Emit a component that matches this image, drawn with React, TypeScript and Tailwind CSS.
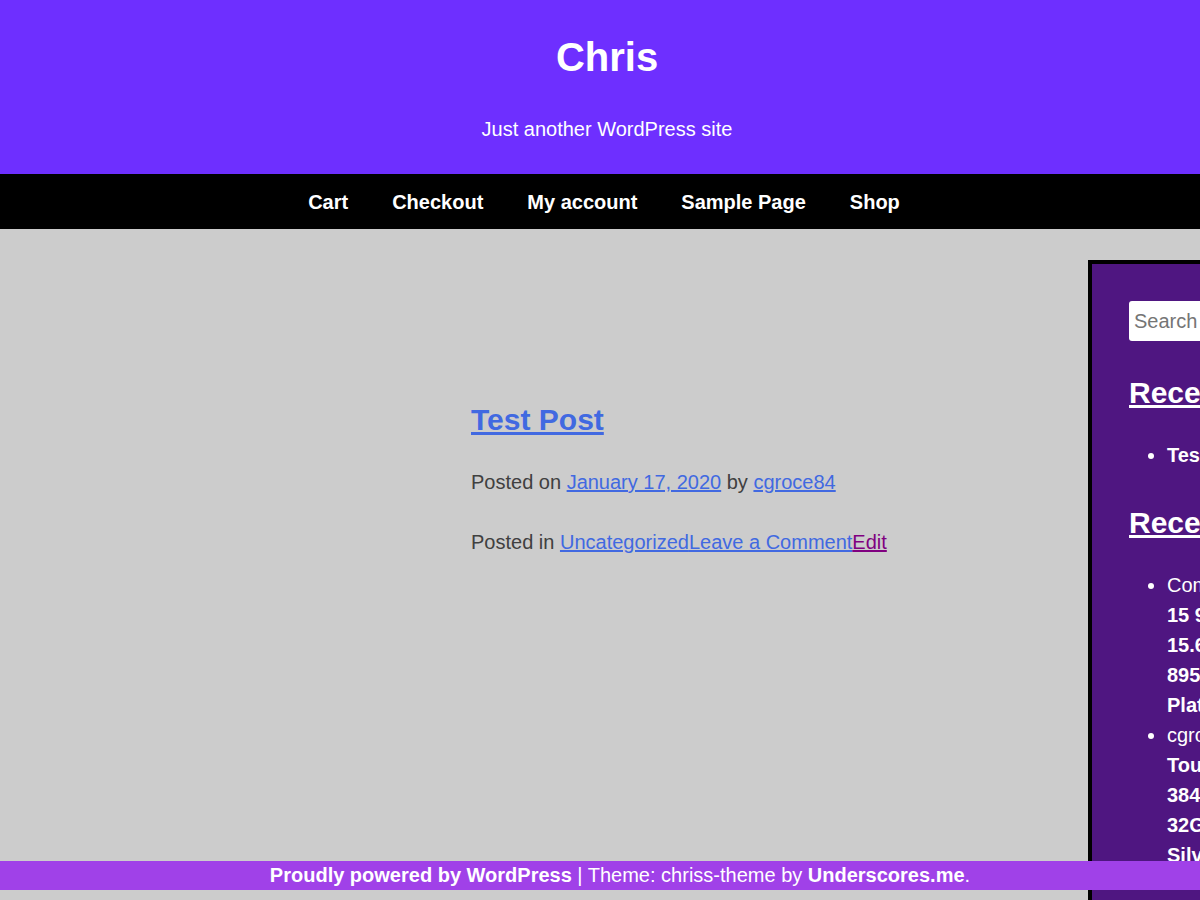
const NAV_ITEMS = ['Cart', 'Checkout', 'My account', 'Sample Page', 'Shop']

function SiteHeader() {
  return (
    <header className="bg-[#6e2fff] text-white text-center pt-[33px] pb-[30px] pl-[14px]">
      <h1 className="text-[40px] leading-[48px] font-bold">Chris</h1>
      <p className="mt-[33px] text-[20px] leading-[30px]">Just another WordPress site</p>
    </header>
  )
}

function MainNav() {
  return (
    <nav className="bg-black h-[55px] flex items-center justify-center pl-[8px]">
      <ul className="flex">
        {NAV_ITEMS.map((item) => (
          <li key={item} className="px-[22px] text-white text-[20px] font-bold leading-[30px]">
            {item}
          </li>
        ))}
      </ul>
    </nav>
  )
}

function Post() {
  return (
    <article className="pl-[471px] pt-[142px] text-[20px] leading-[30px] text-[#404040]">
      <h2 className="text-[30px] leading-[36px] font-bold text-[#4169e1] underline">Test Post</h2>
      <p className="mt-[29px]">
        Posted on <a className="text-[#4169e1] underline">January 17, 2020</a> by{' '}
        <a className="text-[#4169e1] underline">cgroce84</a>
      </p>
      <p className="mt-[30px] whitespace-nowrap">
        Posted in <a className="text-[#4169e1] underline">Uncategorized</a>
        <a className="text-[#4169e1] underline">Leave a Comment</a>
        <a className="text-[#800080] underline">Edit</a>
      </p>
    </article>
  )
}

function Sidebar() {
  return (
    <aside className="w-[360px] shrink-0 border-4 border-black bg-[#4f1681] text-white pt-[37px] pl-[37px] pb-[40px] text-[20px] leading-[30px]">
      <input
        placeholder="Search"
        className="w-[280px] h-[40px] rounded-[3px] bg-white px-[5px] text-[20px] text-[#333] placeholder:text-[#757575] outline-none"
      />
      <h2 className="mt-[34px] text-[30px] leading-[36px] font-bold underline">Recent Posts</h2>
      <ul className="mt-[29px] list-disc pl-[38px]">
        <li className="font-bold">Test Post</li>
      </ul>
      <h2 className="mt-[35px] text-[30px] leading-[36px] font-bold underline">Recent Comments</h2>
      <ul className="mt-[29px] list-disc pl-[38px] whitespace-nowrap">
        <li>
          Commenter on
          <br />
          <a className="font-bold">
            15 9th Gen Laptop
            <br />
            15.6" FHD Display
            <br />
            8950HK 16GB RAM
            <br />
            Platinum Silver
          </a>
        </li>
        <li>
          cgroce84 on
          <br />
          <a className="font-bold">
            Touchscreen Laptop
            <br />
            384GB SSD Storage
            <br />
            32GB Memory
            <br />
            Silver Edition
          </a>
        </li>
      </ul>
    </aside>
  )
}

function SiteFooter() {
  return (
    <footer className="fixed left-0 right-0 bottom-[10px] h-[29px] bg-[#a041e8] text-white text-[20px] leading-[29px] text-center pl-[40px] whitespace-nowrap">
      <a className="font-bold">Proudly powered by WordPress</a>
      <span> | Theme: chriss-theme by </span>
      <a className="font-bold">Underscores.me</a>.
    </footer>
  )
}

export default function App() {
  return (
    <div
      className="min-h-screen h-[900px] overflow-hidden bg-[#cccccc]"
      style={{ fontFamily: '"Liberation Sans", Arial, sans-serif' }}
    >
      <SiteHeader />
      <MainNav />
      <div className="flex mt-[31px]">
        <main className="w-[1088px] shrink-0">
          <Post />
        </main>
        <Sidebar />
      </div>
      <SiteFooter />
    </div>
  )
}
